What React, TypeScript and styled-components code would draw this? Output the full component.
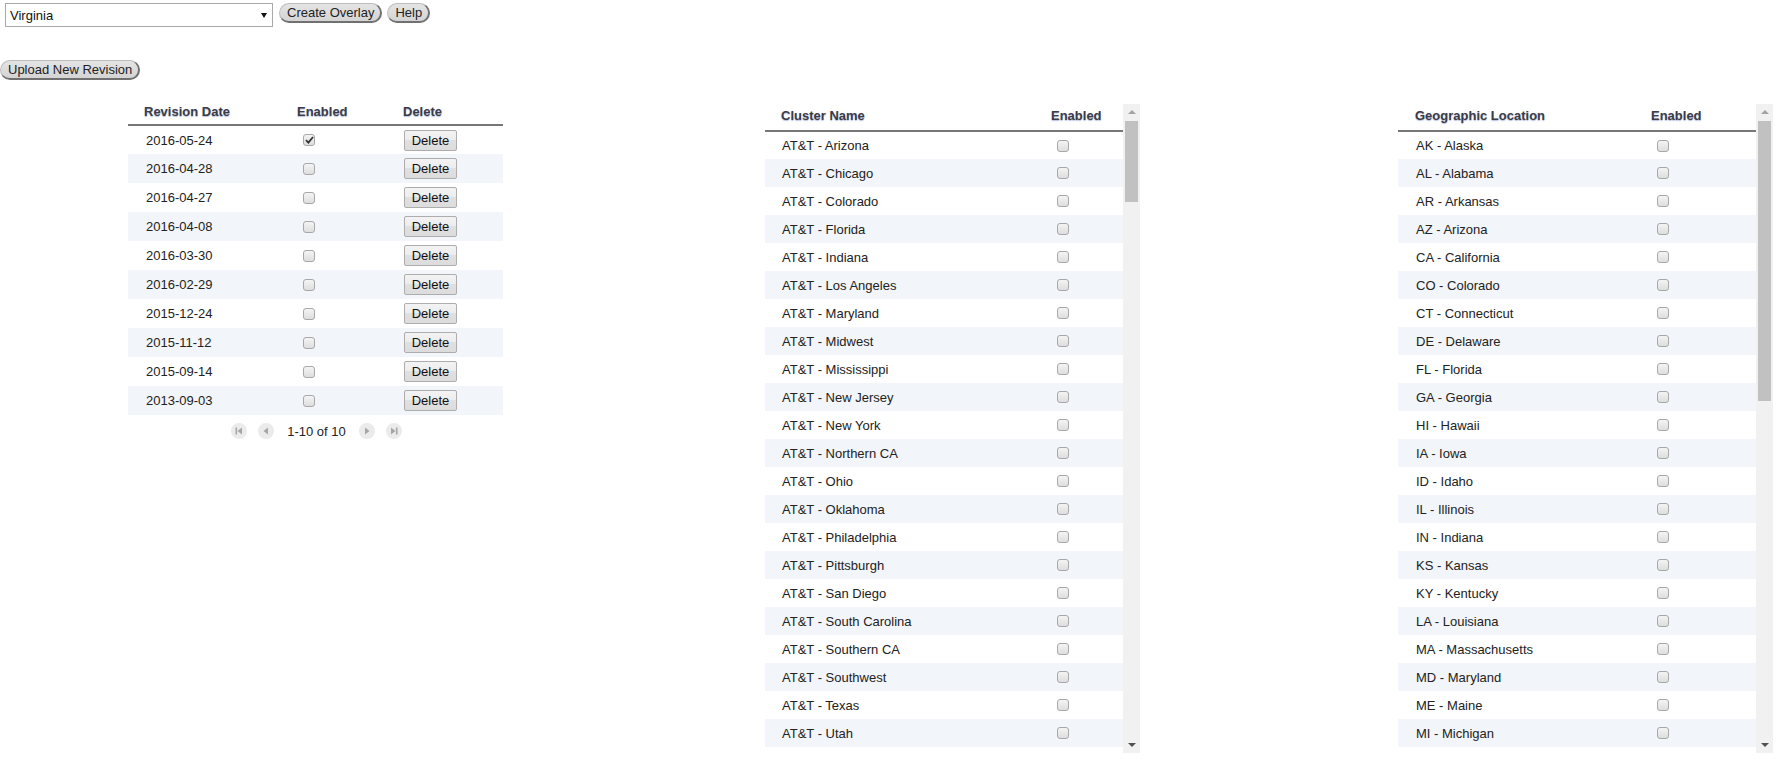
import React from 'react';
import styled, { createGlobalStyle } from 'styled-components';

const Global = createGlobalStyle`
  html, body { margin: 0; padding: 0; background: #fff; }
  body {
    font-family: "Liberation Sans", Arial, sans-serif;
    font-size: 13px;
    color: #222;
  }
  * { box-sizing: border-box; }
`;

const Page = styled.div`
  width: 1788px;
  height: 768px;
  overflow: hidden;
`;

const Toolbar = styled.div`
  display: flex;
  align-items: flex-start;
  gap: 5px;
  padding: 3px 0 0 5px;
  height: 27px;
`;

const SelectWrap = styled.div`
  position: relative;
  width: 268px;
  height: 24px;
  margin-right: 1px;
`;

const NativeSelect = styled.select`
  appearance: none;
  -webkit-appearance: none;
  width: 100%;
  height: 100%;
  border: 1px solid #a9a9a9;
  border-radius: 0;
  background: #fff;
  padding: 0 0 0 4px;
  font-family: "Liberation Sans", Arial, sans-serif;
  font-size: 13px;
  color: #111;
  outline: none;
`;

const SelectArrow = styled.span`
  position: absolute;
  right: 6px;
  top: 10px;
  width: 0;
  height: 0;
  border-left: 3px solid transparent;
  border-right: 3px solid transparent;
  border-top: 5px solid #111;
  pointer-events: none;
`;

const PillButton = styled.button`
  height: 20px;
  padding: 0 6px 0 7px;
  border-radius: 10px;
  border: 1px solid #bdbdbd;
  border-right: 2px solid #707070;
  border-bottom: 2px solid #707070;
  background: linear-gradient(#e4e4e4, #d4d4d4);
  font-family: "Liberation Sans", Arial, sans-serif;
  font-size: 13px;
  line-height: 16px;
  color: #222;
  cursor: pointer;
  white-space: nowrap;
`;

const UploadRow = styled.div`
  margin-top: 33px;
  height: 20px;
  display: flex;
`;

const Panels = styled.div`
  display: flex;
  align-items: flex-start;
  margin-top: 20px;
`;

const RevisionPanel = styled.div`
  margin-left: 128px;
  margin-top: 1px;
  width: 375px;
`;

const ScrollPanel = styled.div<{ $gap: number }>`
  display: flex;
  margin-left: ${(p) => p.$gap}px;
  margin-top: 4px;
  width: 375px;
  height: 649px;
`;

const Viewport = styled.div`
  width: 358px;
  height: 100%;
  overflow: hidden;
`;

const Scrollbar = styled.div`
  display: flex;
  flex-direction: column;
  width: 17px;
  height: 100%;
  background: #f1f1f1;
`;

const ScrollButton = styled.div<{ $dir: 'up' | 'down' }>`
  display: flex;
  align-items: center;
  justify-content: center;
  height: 17px;
  flex: none;

  &::before {
    content: '';
    width: 0;
    height: 0;
    border-left: 4px solid transparent;
    border-right: 4px solid transparent;
    ${(p) =>
      p.$dir === 'up'
        ? 'border-bottom: 4px solid #a3a3a3; margin-top: -1px;'
        : 'border-top: 4px solid #505050; margin-top: 1px;'}
  }
`;

const Track = styled.div`
  flex: 1;
  display: flex;
  flex-direction: column;
  padding: 0 2px;
`;

const Thumb = styled.div`
  background: #c1c1c1;
  flex: none;
`;

const Table = styled.table`
  width: 100%;
  border-collapse: collapse;
  table-layout: fixed;
`;

const HeadCell = styled.th<{ $pad?: number; $h?: number }>`
  height: ${(p) => p.$h ?? 24}px;
  padding: 0 0 3px ${(p) => p.$pad ?? 0}px;
  text-align: left;
  vertical-align: middle;
  font-weight: bold;
  font-size: 13px;
  color: #3c3c46;
  text-shadow: 0 1px 1px rgba(120, 140, 200, 0.55);
  border-bottom: 2px solid #777;
  white-space: nowrap;
`;

const Row = styled.tr<{ $h?: number }>`
  height: ${(p) => p.$h ?? 29}px;
  &:nth-child(even) {
    background: #f2f5f9;
  }
`;

const Cell = styled.td<{ $pad?: number }>`
  padding: 0 0 0 ${(p) => p.$pad ?? 0}px;
  vertical-align: middle;
  font-size: 13px;
  color: #222;
  white-space: nowrap;
  overflow: hidden;
`;

const CheckBox = styled.span`
  display: inline-flex;
  align-items: center;
  justify-content: center;
  width: 12px;
  height: 12px;
  margin: -2px 0 0 6px;
  vertical-align: middle;
  border: 1px solid #a8a8a8;
  border-radius: 3px;
  background: linear-gradient(#f4f4f4, #dedede);
`;

const DeleteButton = styled.button`
  width: 53px;
  height: 21px;
  margin-left: 1px;
  padding: 0;
  border: 1px solid #adadad;
  border-radius: 2px;
  background: linear-gradient(#f3f3f3 0%, #ececec 50%, #e0e0e0 50%, #dcdcdc 100%);
  font-family: "Liberation Sans", Arial, sans-serif;
  font-size: 13px;
  color: #111;
  cursor: pointer;
`;

const Pager = styled.div`
  display: flex;
  justify-content: center;
  align-items: center;
  gap: 11px;
  height: 20px;
  margin-top: 6px;
  padding-left: 2px;
`;

const PagerText = styled.span`
  font-size: 13px;
  color: #222;
  margin: 0 2px;
`;

const PagerIcon = styled.span`
  display: inline-flex;
  align-items: center;
  justify-content: center;
  width: 16px;
  height: 16px;
  border-radius: 50%;
  background: #ebebeb;
`;

const Check = ({ checked }: { checked?: boolean }) => (
  <CheckBox role="checkbox" aria-checked={!!checked}>
    {checked && (
      <svg width="9" height="8" viewBox="0 0 9 8">
        <path d="M1 4.2 L3.4 6.6 L8 1" fill="none" stroke="#333" strokeWidth="1.8" />
      </svg>
    )}
  </CheckBox>
);

const PagerGlyph = ({ kind }: { kind: 'first' | 'prev' | 'next' | 'last' }) => {
  const fill = '#a6a6a6';
  return (
    <PagerIcon>
      <svg width="10" height="10" viewBox="0 0 10 10">
        {kind === 'first' && (
          <>
            <rect x="1.5" y="1.5" width="1.6" height="7" fill={fill} />
            <path d="M8 1.5 L3.5 5 L8 8.5 Z" fill={fill} />
          </>
        )}
        {kind === 'prev' && <path d="M7 1.5 L2.5 5 L7 8.5 Z" fill={fill} />}
        {kind === 'next' && <path d="M3 1.5 L7.5 5 L3 8.5 Z" fill={fill} />}
        {kind === 'last' && (
          <>
            <path d="M2 1.5 L6.5 5 L2 8.5 Z" fill={fill} />
            <rect x="6.9" y="1.5" width="1.6" height="7" fill={fill} />
          </>
        )}
      </svg>
    </PagerIcon>
  );
};

const revisions = [
  '2016-05-24',
  '2016-04-28',
  '2016-04-27',
  '2016-04-08',
  '2016-03-30',
  '2016-02-29',
  '2015-12-24',
  '2015-11-12',
  '2015-09-14',
  '2013-09-03',
];

const regions = [
  'Arizona', 'Chicago', 'Colorado', 'Florida', 'Indiana', 'Los Angeles', 'Maryland',
  'Midwest', 'Mississippi', 'New Jersey', 'New York', 'Northern CA', 'Ohio', 'Oklahoma',
  'Philadelphia', 'Pittsburgh', 'San Diego', 'South Carolina', 'Southern CA', 'Southwest',
  'Texas', 'Utah', 'Virginia', 'Washington', 'West',
];
const carriers = ['AT&T', 'Sprint', 'T-Mobile', 'Verizon', 'US Cellular', 'Cricket', 'MetroPCS'];
const clusters = carriers.flatMap((c) => regions.map((r) => `${c} - ${r}`));

const states = [
  ['AK', 'Alaska'], ['AL', 'Alabama'], ['AR', 'Arkansas'], ['AZ', 'Arizona'], ['CA', 'California'],
  ['CO', 'Colorado'], ['CT', 'Connecticut'], ['DE', 'Delaware'], ['FL', 'Florida'], ['GA', 'Georgia'],
  ['HI', 'Hawaii'], ['IA', 'Iowa'], ['ID', 'Idaho'], ['IL', 'Illinois'], ['IN', 'Indiana'],
  ['KS', 'Kansas'], ['KY', 'Kentucky'], ['LA', 'Louisiana'], ['MA', 'Massachusetts'], ['MD', 'Maryland'],
  ['ME', 'Maine'], ['MI', 'Michigan'], ['MN', 'Minnesota'], ['MO', 'Missouri'], ['MS', 'Mississippi'],
  ['MT', 'Montana'], ['NC', 'North Carolina'], ['ND', 'North Dakota'], ['NE', 'Nebraska'],
  ['NH', 'New Hampshire'], ['NJ', 'New Jersey'], ['NM', 'New Mexico'], ['NV', 'Nevada'],
  ['NY', 'New York'], ['OH', 'Ohio'], ['OK', 'Oklahoma'], ['OR', 'Oregon'], ['PA', 'Pennsylvania'],
  ['RI', 'Rhode Island'], ['SC', 'South Carolina'], ['SD', 'South Dakota'], ['TN', 'Tennessee'],
  ['TX', 'Texas'], ['UT', 'Utah'], ['VA', 'Virginia'], ['VT', 'Vermont'], ['WA', 'Washington'],
  ['WI', 'Wisconsin'], ['WV', 'West Virginia'], ['WY', 'Wyoming'],
];

const PANEL_H = 649;
const HEAD_H = 27;
const ROW_H = 28;
const TRACK_H = PANEL_H - 34;

const thumbHeight = (rows: number) =>
  Math.round((TRACK_H * PANEL_H) / (HEAD_H + rows * ROW_H));

const FakeScrollbar = ({ rows }: { rows: number }) => (
  <Scrollbar>
    <ScrollButton $dir="up" />
    <Track>
      <Thumb style={{ height: thumbHeight(rows) }} />
    </Track>
    <ScrollButton $dir="down" />
  </Scrollbar>
);

type ListProps = {
  gap: number;
  title: string;
  col1: number;
  headPad: number;
  cellPad: number;
  items: string[];
};

const CheckList = ({ gap, title, col1, headPad, cellPad, items }: ListProps) => (
  <ScrollPanel $gap={gap}>
    <Viewport>
      <Table>
        <colgroup>
          <col style={{ width: col1 }} />
          <col style={{ width: 358 - col1 }} />
        </colgroup>
        <thead>
          <tr>
            <HeadCell $pad={headPad} $h={HEAD_H}>{title}</HeadCell>
            <HeadCell $h={HEAD_H}>Enabled</HeadCell>
          </tr>
        </thead>
        <tbody>
          {items.map((it) => (
            <Row key={it} $h={ROW_H}>
              <Cell $pad={cellPad}>{it}</Cell>
              <Cell>
                <Check />
              </Cell>
            </Row>
          ))}
        </tbody>
      </Table>
    </Viewport>
    <FakeScrollbar rows={items.length} />
  </ScrollPanel>
);

export default function App() {
  return (
    <Page>
      <Global />
      <Toolbar>
        <SelectWrap>
          <NativeSelect defaultValue="Virginia">
            <option>Virginia</option>
            <option>Maryland</option>
            <option>Texas</option>
          </NativeSelect>
          <SelectArrow />
        </SelectWrap>
        <PillButton>Create Overlay</PillButton>
        <PillButton>Help</PillButton>
      </Toolbar>

      <UploadRow>
        <PillButton>Upload New Revision</PillButton>
      </UploadRow>

      <Panels>
        <RevisionPanel>
          <Table>
            <colgroup>
              <col style={{ width: 169 }} />
              <col style={{ width: 106 }} />
              <col style={{ width: 100 }} />
            </colgroup>
            <thead>
              <tr>
                <HeadCell $pad={16}>Revision Date</HeadCell>
                <HeadCell>Enabled</HeadCell>
                <HeadCell>Delete</HeadCell>
              </tr>
            </thead>
            <tbody>
              {revisions.map((d, i) => (
                <Row key={d}>
                  <Cell $pad={18}>{d}</Cell>
                  <Cell>
                    <Check checked={i === 0} />
                  </Cell>
                  <Cell>
                    <DeleteButton>Delete</DeleteButton>
                  </Cell>
                </Row>
              ))}
            </tbody>
          </Table>
          <Pager>
            <PagerGlyph kind="first" />
            <PagerGlyph kind="prev" />
            <PagerText>1-10 of 10</PagerText>
            <PagerGlyph kind="next" />
            <PagerGlyph kind="last" />
          </Pager>
        </RevisionPanel>

        <CheckList
          gap={262}
          title="Cluster Name"
          col1={286}
          headPad={16}
          cellPad={17}
          items={clusters}
        />

        <CheckList
          gap={258}
          title="Geographic Location"
          col1={253}
          headPad={17}
          cellPad={18}
          items={states.map(([c, n]) => `${c} - ${n}`)}
        />
      </Panels>
    </Page>
  );
}
